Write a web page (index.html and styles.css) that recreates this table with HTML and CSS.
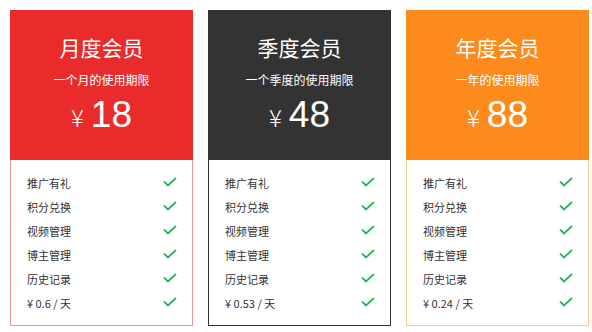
FILE: index.html
```html
<!DOCTYPE html>
<html lang="zh-CN">
<head>
<meta charset="utf-8">
<title>会员</title>
<link rel="stylesheet" href="styles.css">
</head>
<body>
<div class="plans">
  <div class="card card-red">
    <div class="head">
      <div class="title">月度会员</div>
      <div class="sub">一个月的使用期限</div>
      <div class="price"><span class="yen">¥</span><span class="num">18</span></div>
    </div>
    <ul class="list">
      <li><span>推广有礼</span><svg class="ok" viewBox="0 0 14 10"><polyline points="1,4.5 5,8.5 13,1"/></svg></li>
      <li><span>积分兑换</span><svg class="ok" viewBox="0 0 14 10"><polyline points="1,4.5 5,8.5 13,1"/></svg></li>
      <li><span>视频管理</span><svg class="ok" viewBox="0 0 14 10"><polyline points="1,4.5 5,8.5 13,1"/></svg></li>
      <li><span>博主管理</span><svg class="ok" viewBox="0 0 14 10"><polyline points="1,4.5 5,8.5 13,1"/></svg></li>
      <li><span>历史记录</span><svg class="ok" viewBox="0 0 14 10"><polyline points="1,4.5 5,8.5 13,1"/></svg></li>
      <li><span>¥ 0.6 / 天</span><svg class="ok" viewBox="0 0 14 10"><polyline points="1,4.5 5,8.5 13,1"/></svg></li>
    </ul>
  </div>
  <div class="card card-dark">
    <div class="head">
      <div class="title">季度会员</div>
      <div class="sub">一个季度的使用期限</div>
      <div class="price"><span class="yen">¥</span><span class="num">48</span></div>
    </div>
    <ul class="list">
      <li><span>推广有礼</span><svg class="ok" viewBox="0 0 14 10"><polyline points="1,4.5 5,8.5 13,1"/></svg></li>
      <li><span>积分兑换</span><svg class="ok" viewBox="0 0 14 10"><polyline points="1,4.5 5,8.5 13,1"/></svg></li>
      <li><span>视频管理</span><svg class="ok" viewBox="0 0 14 10"><polyline points="1,4.5 5,8.5 13,1"/></svg></li>
      <li><span>博主管理</span><svg class="ok" viewBox="0 0 14 10"><polyline points="1,4.5 5,8.5 13,1"/></svg></li>
      <li><span>历史记录</span><svg class="ok" viewBox="0 0 14 10"><polyline points="1,4.5 5,8.5 13,1"/></svg></li>
      <li><span>¥ 0.53 / 天</span><svg class="ok" viewBox="0 0 14 10"><polyline points="1,4.5 5,8.5 13,1"/></svg></li>
    </ul>
  </div>
  <div class="card card-orange">
    <div class="head">
      <div class="title">年度会员</div>
      <div class="sub">一年的使用期限</div>
      <div class="price"><span class="yen">¥</span><span class="num">88</span></div>
    </div>
    <ul class="list">
      <li><span>推广有礼</span><svg class="ok" viewBox="0 0 14 10"><polyline points="1,4.5 5,8.5 13,1"/></svg></li>
      <li><span>积分兑换</span><svg class="ok" viewBox="0 0 14 10"><polyline points="1,4.5 5,8.5 13,1"/></svg></li>
      <li><span>视频管理</span><svg class="ok" viewBox="0 0 14 10"><polyline points="1,4.5 5,8.5 13,1"/></svg></li>
      <li><span>博主管理</span><svg class="ok" viewBox="0 0 14 10"><polyline points="1,4.5 5,8.5 13,1"/></svg></li>
      <li><span>历史记录</span><svg class="ok" viewBox="0 0 14 10"><polyline points="1,4.5 5,8.5 13,1"/></svg></li>
      <li><span>¥ 0.24 / 天</span><svg class="ok" viewBox="0 0 14 10"><polyline points="1,4.5 5,8.5 13,1"/></svg></li>
    </ul>
  </div>
</div>
</body>
</html>
```
FILE: styles.css
```css
html, body {
  margin: 0;
  padding: 0;
  background: #fff;
  font-family: "Noto Sans CJK SC", "Liberation Sans", sans-serif;
}
.plans {
  display: flex;
  gap: 15px;
  padding: 10px 0 0 10px;
}
.card {
  width: 183px;
  box-sizing: border-box;
  border: 1px solid #f59a9a;
  display: flex;
  flex-direction: column;
}
.card-red { border-color: #f39494; }
.card-red .head { background: #ea2b2b; }
.card-dark { border-color: #333333; }
.card-dark .head { background: #333333; }
.card-orange { border-color: #f6c799; }
.card-orange .head { background: #fd8a1d; }
.head {
  height: 150px;
  margin: -1px -1px 0 -1px;
  color: #fff;
  text-align: center;
  box-sizing: border-box;
  padding-top: 24px;
}
.title {
  font-size: 21px;
  line-height: 26px;
}
.sub {
  font-size: 12px;
  line-height: 16px;
  margin-top: 12px;
}
.price {
  margin-top: 7px;
  display: flex;
  justify-content: center;
  align-items: baseline;
  line-height: 40px;
}
.yen {
  font-size: 24px;
  font-weight: 300;
  margin-right: 7px;
}
.num {
  font-family: "Liberation Sans", sans-serif;
  font-size: 37px;
}
.list {
  list-style: none;
  margin: 0;
  padding: 11px 0 10px 0;
}
.list li {
  height: 24px;
  display: flex;
  align-items: center;
  justify-content: space-between;
  padding: 0 15px 0 16px;
  font-size: 11px;
  color: #333;
}
.ok {
  width: 14px;
  height: 10px;
  fill: none;
  stroke: #2bb35f;
  stroke-width: 1.8;
  margin-top: -2px;
}
```
